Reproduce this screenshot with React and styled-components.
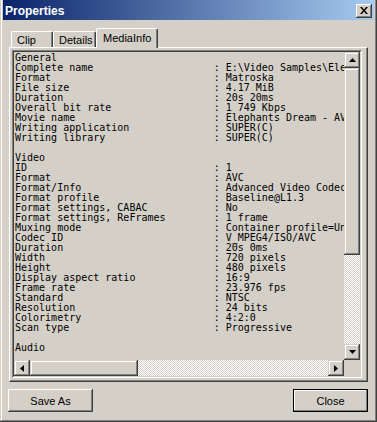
import styled, { createGlobalStyle, css } from "styled-components";

const face = "#D4D0C8";

const GlobalStyle = createGlobalStyle`
  html, body {
    margin: 0;
    padding: 0;
    background: ${face};
  }
  * {
    box-sizing: border-box;
  }
`;

const general = [
  ["Complete name", "E:\\Video Samples\\Elephants Dream.mkv"],
  ["Format", "Matroska"],
  ["File size", "4.17 MiB"],
  ["Duration", "20s 20ms"],
  ["Overall bit rate", "1 749 Kbps"],
  ["Movie name", "Elephants Dream - AVC Baseline"],
  ["Writing application", "SUPER(C)"],
  ["Writing library", "SUPER(C)"],
];

const video = [
  ["ID", "1"],
  ["Format", "AVC"],
  ["Format/Info", "Advanced Video Codec"],
  ["Format profile", "Baseline@L1.3"],
  ["Format settings, CABAC", "No"],
  ["Format settings, ReFrames", "1 frame"],
  ["Muxing mode", "Container profile=Unknown@1.3"],
  ["Codec ID", "V_MPEG4/ISO/AVC"],
  ["Duration", "20s 0ms"],
  ["Width", "720 pixels"],
  ["Height", "480 pixels"],
  ["Display aspect ratio", "16:9"],
  ["Frame rate", "23.976 fps"],
  ["Standard", "NTSC"],
  ["Resolution", "24 bits"],
  ["Colorimetry", "4:2:0"],
  ["Scan type", "Progressive"],
];

const fmt = (rows) => rows.map(([k, v]) => k.padEnd(33) + ": " + v).join("\n");

const report = [
  "General",
  fmt(general),
  "",
  "Video",
  fmt(video),
  "",
  "Audio",
].join("\n");

const tabs = [
  { label: "Clip", width: 42 },
  { label: "Details", width: 43 },
  { label: "MediaInfo", width: 62, active: true },
];

export default function App() {
  return (
    <>
      <GlobalStyle />
      <Window>
        <TitleBar>
          <Title>Properties</Title>
          <TitleClose>
            <svg width="8" height="7" viewBox="0 0 8 7">
              <path d="M0 0h2l2 2.5L6 0h2L5 3.5 8 7H6L4 4.5 2 7H0l3-3.5z" fill="#000" />
            </svg>
          </TitleClose>
        </TitleBar>
        <Body>
          <TabStrip>
            {tabs.map((t) => (
              <Tab key={t.label} $width={t.width} $active={t.active}>
                {t.label}
              </Tab>
            ))}
          </TabStrip>
          <Panel>
            <ListBox>
              <ListInner>
                <Report>{report}</Report>
                <VScroll>
                  <ScrollButton>
                    <svg width="7" height="4" viewBox="0 0 7 4">
                      <path d="M3.5 0L7 4H0z" fill="#000" />
                    </svg>
                  </ScrollButton>
                  <Thumb $size={187} />
                  <Track />
                  <ScrollButton>
                    <svg width="7" height="4" viewBox="0 0 7 4">
                      <path d="M0 0h7L3.5 4z" fill="#000" />
                    </svg>
                  </ScrollButton>
                </VScroll>
                <HScroll>
                  <ScrollButton>
                    <svg width="4" height="7" viewBox="0 0 4 7">
                      <path d="M4 0v7L0 3.5z" fill="#000" />
                    </svg>
                  </ScrollButton>
                  <Thumb $size={108} />
                  <Track />
                  <ScrollButton>
                    <svg width="4" height="7" viewBox="0 0 4 7">
                      <path d="M0 0l4 3.5L0 7z" fill="#000" />
                    </svg>
                  </ScrollButton>
                </HScroll>
                <Corner />
              </ListInner>
            </ListBox>
          </Panel>
          <ButtonRow>
            <PushButton $width={85}>Save As</PushButton>
            <PushButton $width={75} $default>
              Close
            </PushButton>
          </ButtonRow>
        </Body>
      </Window>
    </>
  );
}

const raisedScroll = css`
  background: ${face};
  box-shadow: inset -1px -1px #404040, inset 1px 1px ${face},
    inset -2px -2px #808080, inset 2px 2px #ffffff;
`;

const Window = styled.div`
  width: 377px;
  height: 422px;
  padding: 0 3px 3px 3px;
  display: flex;
  flex-direction: column;
  background: ${face};
  box-shadow: inset -1px -1px #404040, inset 1px 0 ${face},
    inset -2px -2px #808080, inset 2px 0 #ffffff;
  font-family: "Liberation Sans", Arial, sans-serif;
  font-size: 11px;
  color: #000;
`;

const TitleBar = styled.div`
  height: 20px;
  display: flex;
  align-items: center;
  justify-content: space-between;
  padding: 1px 2px 0 2px;
  background: linear-gradient(to right, #0a246a, #a6caf0);
`;

const Title = styled.span`
  color: #fff;
  font-weight: bold;
  font-size: 12px;
`;

const TitleClose = styled.div`
  width: 16px;
  height: 14px;
  display: flex;
  align-items: center;
  justify-content: center;
  ${raisedScroll};
  box-shadow: inset -1px -1px #404040, inset 1px 1px #ffffff,
    inset -2px -2px #808080, inset 2px 2px ${face};
`;

const Body = styled.div`
  display: flex;
  flex-direction: column;
  padding: 8px 6px 0 6px;
`;

const TabStrip = styled.div`
  height: 19px;
  display: flex;
  align-items: flex-end;
  padding-left: 2px;
`;

const Tab = styled.div`
  width: ${(p) => p.$width}px;
  height: ${(p) => (p.$active ? 20 : 16)}px;
  margin-bottom: ${(p) => (p.$active ? -1 : 0)}px;
  padding: ${(p) => (p.$active ? "3px 0 0 6px" : "2px 0 0 5px")};
  background: ${face};
  border-left: 1px solid #fff;
  border-top: 1px solid #fff;
  border-right: 1px solid #404040;
  border-radius: 2px 2px 0 0;
  box-shadow: inset -1px 0 #808080;
  position: relative;
  z-index: ${(p) => (p.$active ? 1 : 0)};
  white-space: nowrap;
`;

const Panel = styled.div`
  height: 335px;
  padding: 2px 3px 3px 2px;
  border: 1px solid;
  border-color: #fff #404040 #404040 #fff;
  box-shadow: inset -1px -1px #808080;
`;

const ListBox = styled.div`
  width: 350px;
  height: 328px;
  border: 1px solid;
  border-color: #808080 #fff #fff #808080;
`;

const ListInner = styled.div`
  width: 100%;
  height: 100%;
  border: 1px solid;
  border-color: #404040 ${face} ${face} #404040;
  display: grid;
  grid-template-columns: 1fr 16px;
  grid-template-rows: 1fr 16px;
  overflow: hidden;
`;

const Report = styled.pre`
  margin: 0;
  padding: 1px 0 0 1px;
  overflow: hidden;
  font-family: "DejaVu Sans Mono", "Liberation Mono", monospace;
  font-size: 10px;
  line-height: 10px;
  color: #000;
  white-space: pre;
`;

const VScroll = styled.div`
  display: flex;
  flex-direction: column;
`;

const HScroll = styled.div`
  display: flex;
`;

const ScrollButton = styled.div`
  width: 16px;
  height: 16px;
  flex: none;
  display: flex;
  align-items: center;
  justify-content: center;
  ${raisedScroll};
`;

const Thumb = styled.div`
  flex: 0 0 ${(p) => p.$size}px;
  ${raisedScroll};
`;

const Track = styled.div`
  flex: 1;
  background-color: #fff;
  background-image: conic-gradient(
    #fff 25%,
    ${face} 0 50%,
    #fff 0 75%,
    ${face} 0
  );
  background-size: 2px 2px;
`;

const Corner = styled.div`
  background: ${face};
`;

const ButtonRow = styled.div`
  display: flex;
  justify-content: space-between;
  margin: 7px 0 0 -1px;
`;

const PushButton = styled.div`
  width: ${(p) => p.$width}px;
  height: 23px;
  display: flex;
  align-items: center;
  justify-content: center;
  background: ${face};
  box-shadow: ${(p) =>
    p.$default
      ? `inset 0 0 0 1px #000, inset -2px -2px #808080, inset 2px 2px #fff`
      : `inset -1px -1px #404040, inset 1px 1px #fff, inset -2px -2px #808080, inset 2px 2px ${face}`};
`;
